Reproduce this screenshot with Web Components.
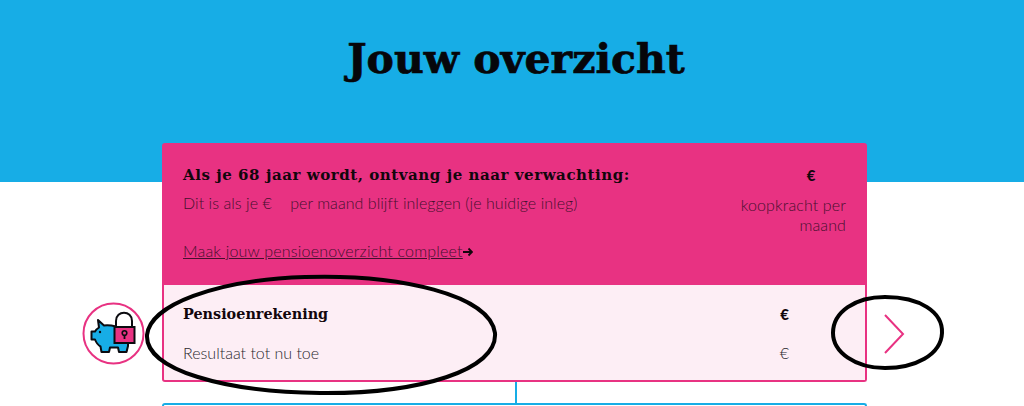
<!DOCTYPE html>
<html lang="nl">
  <head>
    <meta charset="UTF-8" />
    <title>Jouw overzicht</title>
    <style>
      html, body { margin: 0; height: 406px; overflow: hidden; background: #fff; }
    </style>
  </head>
  <body>
    <overzicht-page>
      <overzicht-hero slot="hero">Jouw overzicht</overzicht-hero>
      <pink-summary slot="summary"></pink-summary>
      <piggy-icon slot="icon"></piggy-icon>
      <account-row slot="row"></account-row>
      <next-arrow slot="arrow"></next-arrow>
      <next-card slot="next"></next-card>
    </overzicht-page>
    <hand-marks></hand-marks>

    <script>
      const SLAB = '"DejaVu Serif", "Liberation Serif", serif';
      const SANS = 'Lato, "Open Sans", sans-serif';

      function define(name, html) {
        customElements.define(name, class extends HTMLElement {
          constructor() {
            super();
            this.attachShadow({ mode: "open" }).innerHTML = html;
          }
        });
      }

      define("overzicht-page", `
        <style>
          :host { display: block; position: relative; }
          .grid { display: grid; grid-template-columns: 162px 705px 1fr; margin-top: -39px; }
          .icon { grid-column: 1; grid-row: 2; display: flex; justify-content: flex-end; align-items: center; padding-right: 17px; }
          .main { grid-column: 2; grid-row: 1; }
          .row { grid-column: 2; grid-row: 2; }
          .arrow { grid-column: 3; grid-row: 2; display: flex; align-items: center; }
          .next { grid-column: 2; grid-row: 3; }
        </style>
        <slot name="hero"></slot>
        <div class="grid">
          <div class="main"><slot name="summary"></slot></div>
          <div class="icon"><slot name="icon"></slot></div>
          <div class="row"><slot name="row"></slot></div>
          <div class="arrow"><slot name="arrow"></slot></div>
          <div class="next"><slot name="next"></slot></div>
        </div>
      `);

      define("overzicht-hero", `
        <style>
          :host { display: block; height: 182px; background: #17ade6; text-align: center; box-sizing: border-box; padding: 34px 0 0 8px; }
          h1 { margin: 0; font: 700 41px/50px ${SLAB}; color: #06060a; -webkit-text-stroke: 0.7px #06060a; }
        </style>
        <h1><slot></slot></h1>
      `);

      define("pink-summary", `
        <style>
          :host { display: block; height: 142px; box-sizing: border-box; background: #e83282; border-radius: 3px 3px 0 0; padding: 21px 21px 0; color: #45102e; font: 300 16px/20px ${SANS}; }
          .top { display: flex; justify-content: space-between; }
          .left { flex: 1; }
          .title { font: 700 15px/22px ${SLAB}; letter-spacing: 0.56px; color: #12060c; }
          .right { width: 120px; text-align: right; }
          .euro { font: 900 15px/22px ${SANS}; color: #12060c; text-align: center; padding-left: 50px; }
          .sub { margin-top: 7px; letter-spacing: 0.05px; }
          .right .sub { margin-top: 9px; letter-spacing: 0.12px; }
          .sub span { display: inline-block; width: 14px; }
          .link { margin-top: 28px; display: flex; align-items: center; }
          .link a { color: inherit; text-decoration: underline; letter-spacing: 0.2px; }
          .link svg { display: block; margin-top: 1px; }
        </style>
        <div class="top">
          <div class="left">
            <div class="title">Als je 68 jaar wordt, ontvang je naar verwachting:</div>
            <div class="sub">Dit is als je €<span></span> per maand blijft inleggen (je huidige inleg)</div>
            <div class="link"><a>Maak jouw pensioenoverzicht compleet</a>
              <svg width="10" height="10" viewBox="0 0 10 10" fill="none" stroke="#12060c" stroke-width="1.8"><path d="M0 5H9M5.5 1.5 9 5 5.5 8.5"/></svg>
            </div>
          </div>
          <div class="right">
            <div class="euro">€</div>
            <div class="sub">koopkracht per maand</div>
          </div>
        </div>
      `);

      define("account-row", `
        <style>
          :host { display: block; height: 97px; box-sizing: border-box; background: #fdeef5; border: 2px solid #e83282; border-top: 0; border-radius: 0 0 3px 3px; padding: 19px 76px 0 19px; color: #2a282e; font: 300 16px/20px ${SANS}; }
          .line { display: flex; justify-content: space-between; }
          .bold { font: 700 14.4px/20px ${SLAB}; color: #12060c; height: 39px; }
          .bold b { font: 900 15px/20px ${SANS}; }
        </style>
        <div class="line bold"><span>Pensioenrekening</span><b>€</b></div>
        <div class="line"><span>Resultaat tot nu toe</span><span>€</span></div>
      `);

      define("piggy-icon", `
        <style>:host { display: block; width: 63px; height: 63px; } svg { display: block; }</style>
        <svg width="63" height="63" viewBox="0 0 63 63">
          <circle cx="31.5" cy="31.5" r="30" fill="#fff" stroke="#e83282" stroke-width="2"/>
          <path d="M16 18 22 23.500C26 23 30 23.500 34 24.500L46 40V44L44.500 50H37L36 45.500H28L27 50H19.500L18.500 44.500C15.500 43 14 40 13 37.500H9.500V29.500H13C14 27.500 15.500 26.500 17 25.500Z" fill="#17ade6" stroke="#0b0b10" stroke-width="2" stroke-linejoin="round"/>
          <circle cx="18" cy="30" r="1.200" fill="#0b0b10"/>
          <path d="M34 25V19C34 8 50 8 50 19V25" fill="#fff" stroke="#0b0b10" stroke-width="2"/>
          <rect x="32.500" y="25" width="20" height="16" fill="#e83282" stroke="#0b0b10" stroke-width="2"/>
          <circle cx="42.500" cy="31" r="2.300" fill="none" stroke="#0b0b10" stroke-width="1.600"/>
          <path d="M42.500 33V37" stroke="#0b0b10" stroke-width="1.800"/>
        </svg>
      `);

      define("next-arrow", `
        <style>:host { display: block; padding-left: 16px; } svg { display: block; }</style>
        <svg width="22" height="40" viewBox="0 0 22 40" fill="none" stroke="#e83282" stroke-width="2"><path d="M2 1 20 20 2 39"/></svg>
      `);

      define("next-card", `
        <style>
          :host { display: block; }
          .stem { width: 2px; height: 21px; background: #17ade6; margin-left: 353px; }
          .card { height: 3px; border: 2px solid #17ade6; border-bottom: 0; border-radius: 3px 3px 0 0; background: #fff; }
        </style>
        <div class="stem"></div>
        <div class="card"></div>
      `);

      // the two hand drawn ovals lie over the page
      define("hand-marks", `
        <style>
          :host { display: block; position: absolute; left: 0; top: 0; pointer-events: none; }
          svg { display: block; }
        </style>
        <svg width="1024" height="406" viewBox="0 0 1024 406" fill="none" stroke="#000" stroke-width="4">
          <path d="M147 335C150 305 215 280 305 277 400 274 490 295 495 333 498 370 420 394 320 393 225 392 145 370 147 335Z"/>
          <path d="M833 333C833 312 855 297 885 297 920 297 943 312 942 333 941 355 915 368 885 368 855 368 833 352 833 333Z"/>
        </svg>
      `);
    </script>
  </body>
</html>
